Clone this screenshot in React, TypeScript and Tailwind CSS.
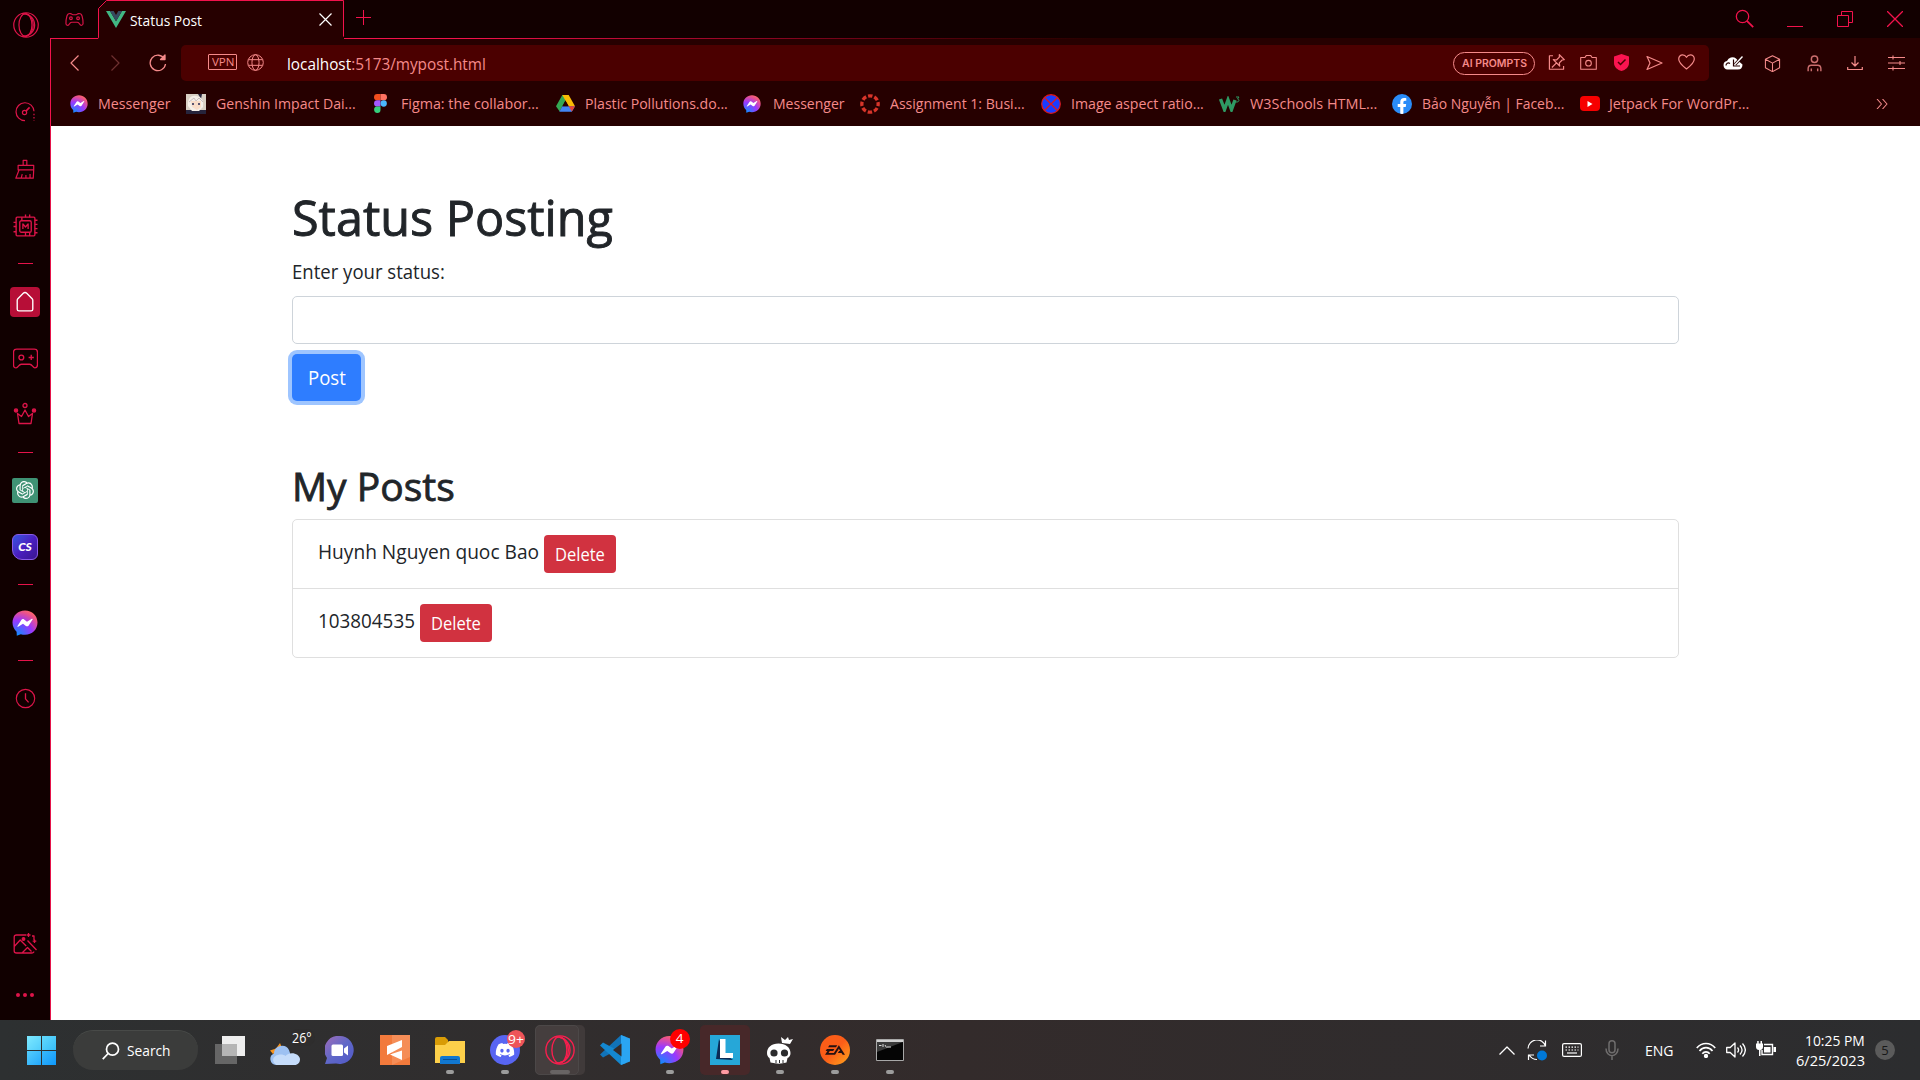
import React, { useLayoutEffect, useRef, useState } from "react";
import { FaDiscord, FaFacebookF } from "react-icons/fa";
import { SiOpenai, SiEa } from "react-icons/si";

/* Text condensed or widened to fill the width of its box. */
function T({ className = "", children }: { className?: string; children: React.ReactNode }) {
  const box = useRef<HTMLSpanElement>(null);
  const inner = useRef<HTMLSpanElement>(null);
  const [k, setK] = useState(1);
  useLayoutEffect(() => {
    if (box.current && inner.current) setK(box.current.clientWidth / inner.current.offsetWidth);
  }, []);
  return (
    <span ref={box} className={`block shrink-0 whitespace-nowrap ${className}`}>
      <span ref={inner} className="inline-block origin-left" style={{ transform: `scaleX(${k})` }}>
        {children}
      </span>
    </span>
  );
}

type IconProps = { className?: string; box?: string; sw?: number; children: React.ReactNode };
function I({ className = "", box = "0 0 24 24", sw = 1.3, children }: IconProps) {
  return (
    <svg viewBox={box} className={`block shrink-0 ${className}`} fill="none" stroke="currentColor" strokeWidth={sw} strokeLinejoin="round">
      {children}
    </svg>
  );
}

function Messenger({ className = "", id }: { className?: string; id: string }) {
  return (
    <svg viewBox="0 0 26 26" className={`block shrink-0 ${className}`}>
      <defs>
        <radialGradient id={id} cx="0.2" cy="1" r="1.1">
          <stop offset="0" stopColor="#0a8fff" />
          <stop offset="0.55" stopColor="#9a38ff" />
          <stop offset="0.85" stopColor="#e8508f" />
          <stop offset="1" stopColor="#ff6a68" />
        </radialGradient>
      </defs>
      <path d="M13 .4C5.800.4.5 5.700.5 12.600c0 3.700 1.500 6.800 4.100 9.100l.2 4 4-1.500c1.300.4 2.700.6 4.200.6 7.200 0 12.500-5.200 12.500-12.200S20.200.4 13 .4z" fill={`url(#${id})`} />
      <path d="M5.500 16l3.800-6c.6-1 1.900-1.200 2.800-.5l2.900 2.200 4.900-2.900c.6-.3 1 .1.700.6l-3.900 6c-.6 1-1.900 1.200-2.800.5l-2.900-2.100-4.900 2.900c-.5.3-1-.2-.6-.7z" fill="#fff" />
    </svg>
  );
}

function Opera({ className = "" }: { className?: string }) {
  return (
    <I className={className} sw={1.1}>
      <circle cx="12" cy="12" r="11.300" />
      <ellipse cx="11.500" cy="12" rx="6" ry="10.500" />
      <path d="M12 2c4 .5 6.700 4.500 6.700 10S16 21.500 12 22" />
      <path d="M8 1.500c7-.5 12 4.500 12 10.500s-5 11-12 10.500" />
    </I>
  );
}

const Sep = ({ className }: { className: string }) => <div className={`h-px w-[15px] shrink-0 bg-[#e5134a] ${className}`} />;
const Slot = ({ className, children }: { className: string; children: React.ReactNode }) => (
  <div className={`flex h-[30px] w-[30px] shrink-0 items-center justify-center ${className}`}>{children}</div>
);

function Sidebar() {
  return (
    <aside className="flex w-[50px] shrink-0 flex-col items-center bg-[#110000] text-[#dd1449]">
      <Slot className="mt-[10px] ml-px"><Opera className="h-[26px] w-[26px]" /></Slot>
      <Slot className="mt-[57px]">
        <I className="h-[22px] w-[22px]">
          <path d="M12 21.500a9.800 9.800 0 1 1 9.800-10.300" />
          <path d="M21.800 14v7.500" strokeDasharray="1.500 2" />
          <circle cx="11.500" cy="12.500" r="2.300" /><path d="M13 11l4-4" strokeWidth="1.800" />
        </I>
      </Slot>
      <Slot className="mt-[27px]">
        <I className="h-[22px] w-[22px]">
          <path d="M10 8V2.500h4V8M4.500 8h17v5h-17zM5.500 13L2 22h19l.5-9M8 21.500l1-4M13 21.500v-3M17.500 21.500v-4" />
        </I>
      </Slot>
      <Slot className="mt-[27px]">
        <I className="h-[25px] w-[25px]">
          <rect x="3" y="3" width="18" height="18" rx="1" /><rect x="6.500" y="6.500" width="11" height="11" rx="1.500" />
          <path d="M9.500 14.500v-5l2.500 3 2.500-3v5M8.500 3v3.500M12 .5V3M16 .5V3M12 17.500V21M16 17.500V21M.5 8H3M.5 12H3M.5 17H3M21 6h2.500M21 10h2.500M21 14h2.500M21 18h2.500" />
        </I>
      </Slot>
      <Sep className="mt-[22px]" />
      <Slot className="mt-[23px] rounded-[4px] bg-[#b70e37] text-white">
        <I className="h-[22px] w-[22px]" sw={1.5}>
          <path d="M3.500 10.200c0-.7.200-1.200.700-1.700l5.900-6c1.200-1.200 2.600-1.200 3.800 0l5.900 6c.5.5.700 1 .7 1.700v9.600c0 1.200-.7 1.900-1.900 1.900H5.400c-1.200 0-1.900-.7-1.900-1.900z" />
        </I>
      </Slot>
      <Slot className="mt-[26px]">
        <I className="h-[25px] w-[25px]" sw={1.3}>
          <path d="M3.500 3h17q3 0 3 3v12q0 3-2.500 3c-2 0-2.500-3.500-5-3.500H8c-2.500 0-3 3.500-5 3.500Q.5 21 .5 18V6q0-3 3-3z" /><circle cx="8" cy="11" r="2.300" /><path d="M17.500 8.500v5M15 11h5" />
        </I>
      </Slot>
      <Slot className="mt-[26px]">
        <I className="h-[24px] w-[24px]">
          <path d="M4.500 11.500L6 21.500h12l1.500-10-4 3L12 8l-3.500 6.500z" /><circle cx="12" cy="3.500" r="2" /><circle cx="3" cy="8.500" r="1.600" fill="currentColor" /><circle cx="21" cy="8.500" r="1.600" fill="currentColor" />
        </I>
      </Slot>
      <Sep className="mt-[23px]" />
      <Slot className="mt-[22px]">
        <div className="flex h-[25px] w-[26px] items-center justify-center rounded-[2px] bg-[#3f9274] text-[18px] text-white"><SiOpenai /></div>
      </Slot>
      <Slot className="mt-[27px]">
        <div className="flex h-[26px] w-[26px] items-center justify-center rounded-[6px] rounded-bl-[10px] border border-[#8b5be8] bg-linear-to-br from-[#2d55e0] via-[#4a1ec0] to-[#3a1690] font-['Lato'] text-[12px] font-black italic text-white">CS</div>
      </Slot>
      <Sep className="mt-[22px]" />
      <Slot className="mt-[23px]"><Messenger id="ms-side" className="h-[26px] w-[26px]" /></Slot>
      <Sep className="mt-[22px]" />
      <Slot className="mt-[22px]">
        <I className="h-[21px] w-[21px]"><circle cx="12" cy="12" r="10.500" /><path d="M12 6v6.500l3.500 4" strokeWidth="1.500" /></I>
      </Slot>
      <Slot className="mt-[216px]">
        <I className="h-[24px] w-[24px]">
          <path d="M13 3H3.500C2 3 1.200 3.800 1.200 5v14c0 1.200.8 2 2.300 2h15c1.500 0 2.300-.8 2.300-1.500M1.200 14.500l6-6.500 6 6M9 21l5.500-5.500 4 4M14.500 8.500L23.500 18M19 4h2v4M15.500 1v4M13.500 3h4M21.500 7.500v3.500M19.700 9.200h3.600" />
          <circle cx="10.500" cy="7" r="1.300" fill="currentColor" />
        </I>
      </Slot>
      <Slot className="mt-[21px] gap-[3px]">
        <i className="h-[4px] w-[4px] rounded-full bg-[#dd1449]" /><i className="h-[4px] w-[4px] rounded-full bg-[#dd1449]" /><i className="h-[4px] w-[4px] rounded-full bg-[#dd1449]" />
      </Slot>
    </aside>
  );
}

function TabStrip() {
  return (
    <div className="flex h-[39px] shrink-0 bg-[#120000] text-[#f2124c]">
      <div className="flex w-[48px] items-center justify-center border-b border-[#f2124c]">
        <I className="h-[19px] w-[19px] text-[#d91347]" sw={1.5}>
          <path d="M7 4.500c-2.500-.3-4 .8-4.600 3.200C1.600 10.700 1 14 1.200 17c.2 2.700 3 3.200 4.300.8.800-1.500 1.500-2.300 3-2.300h7c1.500 0 2.200.8 3 2.300 1.300 2.400 4.100 1.900 4.300-.8.2-3-.4-6.300-1.200-9.300C21 5.300 19.500 4.200 17 4.500c-1.500.2-1.500 1.500-3 1.500h-4C8.500 6 8.500 4.700 7 4.500z" />
          <circle cx="7.500" cy="10.500" r="1.700" /><circle cx="16.500" cy="10.500" r="1.700" />
        </I>
      </div>
      <div className="relative flex w-[246px] items-center bg-[#120000]">
        <svg className="absolute inset-0" width="246" height="39" viewBox="0 0 246 39">
          <path d="M0 39V8.500L8.500.5H245.500V39z" fill="#260000" />
          <path d="M0 38.500L.5 37V8.500L8.500.5H245.500V36l2 2.500" fill="none" stroke="#f2124c" />
        </svg>
        <svg className="relative ml-[8px] h-[17px] w-[20px]" viewBox="0 0 20 17">
          <path d="M0 0h4l6 10.300L16 0h4L10 17z" fill="#41b883" /><path d="M4 0h3.700L10 4l2.300-4H16l-6 10.300z" fill="#35495e" />
        </svg>
        <T className="relative ml-[4px] w-[72px] text-[15px] leading-[20px] text-white">Status Post</T>
        <I className="relative ml-[117px] h-[13px] w-[13px] text-white" box="0 0 13 13" sw={1.2}><path d="M.5.500l12 12M12.500.500l-12 12" /></I>
      </div>
      <div className="flex flex-1 flex-col">
        <div className="flex flex-1 items-center">
          <I className="mb-[3px] ml-[12px] h-[15px] w-[15px]" box="0 0 15 15" sw={1}><path d="M7.500 0v15M0 7.500h15" /></I>
          <I className="mb-[2px] ml-auto h-[19px] w-[19px]" sw={1.600}><circle cx="9.500" cy="9.500" r="7.800" /><path d="M15 15l8 8" strokeWidth="2.200" /></I>
          <div className="mt-[15px] ml-[33px] h-px w-[16px] bg-[#f2124c]" />
          <I className="ml-[34px] h-[16px] w-[16px]" box="0 0 16 16" sw={1}><path d="M.5 4.500h11v11H.5zM4.500 4.500V.5h11v11h-4" /></I>
          <I className="mr-[17px] ml-[34px] h-[16px] w-[16px]" box="0 0 16 16" sw={1.300}><path d="M0 0l16 16M16 0L0 16" /></I>
        </div>
        <div className="h-px bg-linear-to-r from-[#f2124c] from-8% to-[#260000] to-48%" />
      </div>
    </div>
  );
}

function AddressRow() {
  return (
    <div className="flex h-[42px] items-end text-[#f58a8a]">
      <div className="flex h-[36px] items-center">
        <I className="ml-[19px] h-[16px] w-[9px]" box="0 0 9 16" sw={1.200}><path d="M8.500.500L1 8l7.500 7.500" /></I>
        <I className="ml-[32px] h-[16px] w-[9px] opacity-35" box="0 0 9 16" sw={1.200}><path d="M.5.500L8 8 .5 15.500" /></I>
        <I className="ml-[29px] h-[18px] w-[18px]" box="0 0 18 18" sw={1.300}><path d="M15.500 5A7.700 7.700 0 1 0 16.500 10" /><path d="M16 1v4.500h-4.500z" fill="currentColor" /></I>
      </div>
      <div className="ml-[14px] flex h-[36px] w-[1528px] items-center rounded-[5px] bg-[#4b0000]">
        <div className="mb-[2px] ml-[27px] flex h-[16px] w-[29px] items-center justify-center rounded-[1px] border border-[#f58a8a]">
          <T className="w-[22px] text-[11px] leading-[14px]">VPN</T>
        </div>
        <I className="mb-[2px] ml-[10px] h-[17px] w-[17px]" sw={1.400}><circle cx="12" cy="12" r="11" /><ellipse cx="12" cy="12" rx="5" ry="11" /><path d="M2 8h20M2 16h20" /></I>
        <T className="mt-[2px] ml-[23px] w-[199px] text-[16px]"><span className="text-white">localhost</span>:5173/mypost.html</T>
        <div className="ml-auto flex h-[23px] w-[82px] items-center justify-center rounded-full border border-[#f58a8a]">
          <T className="w-[65px] font-['Inter'] text-[10px] leading-[20px] font-semibold">AI PROMPTS</T>
        </div>
        <I className="mb-[2px] ml-[13px] h-[17px] w-[17px]" sw={1.700}><path d="M7 2.500H2v19h20V17M16 1l7 7-3 .5-4 4 .5 4.500L7.500 8l4.500.500 4-4zM12 12.500L5.500 19" /></I>
        <I className="mb-[2px] ml-[15px] h-[17px] w-[17px]" sw={1.500}><path d="M1 5h6l2-3h6l2 3h6v16.500H1z" /><circle cx="12" cy="13" r="4" /></I>
        <svg viewBox="0 0 15 17" className="mb-[2px] ml-[17px] h-[17px] w-[15px]"><path d="M7.500 0L15 2.500V9c0 4-3.500 7-7.500 8C3.500 16 0 13 0 9V2.500z" fill="#fa1450" /><path d="M4 8l2.500 2.500 5-5" fill="none" stroke="#4b0000" strokeWidth="1.500" /></svg>
        <I className="ml-[17px] h-[16px] w-[17px]" box="0 0 17 16" sw={1.200}><path d="M1 1.500L16 8 1 14.500 4 8z" /></I>
        <I className="mr-[14px] mb-[3px] ml-[15px] h-[16px] w-[17px]" box="0 0 17 16" sw={1.200}><path d="M8.500 15C4 11.500.7 8.500.7 5 .7 2.500 2.500.8 4.600.8c1.700 0 3 .900 3.900 2.500C9.400 1.700 10.700.8 12.400.8c2.100 0 3.900 1.700 3.900 4.200 0 3.500-3.300 6.500-7.800 10z" /></I>
      </div>
      <div className="flex h-[36px] items-center">
        <svg viewBox="0 0 20 14" className="ml-[14px] h-[14px] w-[20px]"><path d="M4.500 13.500A4.300 4.300 0 0 1 4 5a6 6 0 0 1 9-2.500l3 3L19.500 8.500c0 3-1.500 5-4.500 5z" fill="#fff" /><path d="M19.500.5l-7.500 8" stroke="#260000" strokeWidth="3" /><path d="M19.500.5l-7.500 8" stroke="#fff" strokeWidth="1.300" /><path d="M10.500 3.500V10H17M3 9.500c0-2 2-3.500 4-2" stroke="#260000" strokeWidth="1.200" fill="none" /></svg>
        <I className="ml-[21px] h-[17px] w-[17px]" sw={1.500}><path d="M12 1l10 5v12l-10 5.500L2 18V6zM2 6l10 5.500L22 6M12 11.500v12" /></I>
        <I className="ml-[25px] h-[17px] w-[17px] opacity-80" sw={2}><circle cx="12" cy="6" r="4.500" /><path d="M3 23v-3.500c0-3 1.500-5 4.500-5h9c3 0 4.500 2 4.500 5V23M7.500 23v-4M16.500 23v-4" /></I>
        <I className="ml-[24px] h-[16px] w-[16px]" box="0 0 16 16" sw={1.200}><path d="M8 1v10M4.500 7.500L8 11l3.500-3.500M.7 12v2.500h14.600V12" /></I>
        <I className="ml-[25px] h-[16px] w-[17px]" box="0 0 17 16" sw={1.100}><path d="M0 2.500h17M0 8h17M0 13.500h17M5 .500v4M12 6v4M5 11.500v4" /></I>
      </div>
    </div>
  );
}

function Bookmarks() {
  const ic = "h-[20px] w-[20px] shrink-0";
  return (
    <div className="flex h-[45px] items-center text-[15px] text-[#f58a8a]">
      <Messenger id="ms-b1" className="ml-[19px] h-[18px] w-[18px]" />
      <T className="ml-[10px] w-[73px]">Messenger</T>
      <svg viewBox="0 0 20 20" className={`ml-[15px] ${ic}`}>
        <path d="M0 0h20v20H0z" fill="#d8cfc4" /><path d="M0 16h20v4H0zM12 0h4l-1 5z" fill="#26243c" /><path d="M2 12C1 4 6 1 10 2c5 0 8 4 7 11l-4 4H6z" fill="#f5efe8" /><path d="M5 7h10v6l-4 3-5-3z" fill="#f9dcc8" /><path d="M6 9h2v2H6zM12 9h2v2h-2z" fill="#5a5470" /><path d="M3 8l5-4 2 3 3-3 4 4" fill="none" stroke="#c9bdc0" />
      </svg>
      <T className="ml-[10px] w-[140px]">Genshin Impact Dai...</T>
      <svg viewBox="0 0 13 19" className="ml-[18px] h-[19px] w-[13px] shrink-0">
        <path d="M3.200 0h3.300v6.300H3.200a3.150 3.150 0 0 1 0-6.300z" fill="#f24e1e" /><path d="M6.500 0h3.300a3.150 3.150 0 0 1 0 6.300H6.500z" fill="#ff7262" /><path d="M3.200 6.300h3.300v6.300H3.200a3.150 3.150 0 0 1 0-6.300z" fill="#a259ff" /><circle cx="9.700" cy="9.500" r="3.150" fill="#4ab8fd" /><path d="M3.200 12.600h3.300v3.200a3.200 3.200 0 1 1-3.300-3.200z" fill="#35cf7c" />
      </svg>
      <T className="ml-[14px] w-[138px]">Figma: the collabor...</T>
      <svg viewBox="0 0 18 16" className="ml-[17px] h-[17px] w-[19px] shrink-0">
        <path d="M6 0h6l-3 5-5.500 10.500L0 10.500z" fill="#34a853" /><path d="M6 0h6l6 10.500h-6z" fill="#fbbc04" /><path d="M3.200 15.700L6 10.500h12l-3 5.200z" fill="#4285f4" /><path d="M12 10.500h6l-3 5z" fill="#ea4335" /><path d="M9 5.300l3 5.200H6z" fill="#260000" />
      </svg>
      <T className="ml-[10px] w-[143px]">Plastic Pollutions.do...</T>
      <Messenger id="ms-b2" className="ml-[15px] h-[18px] w-[18px]" />
      <T className="ml-[12px] w-[72px]">Messenger</T>
      <I className={`ml-[15px] ${ic}`} sw={4}><circle cx="12" cy="12" r="9.800" stroke="#d8352a" strokeDasharray="5.300 2.400" strokeDashoffset="2.650" /></I>
      <T className="ml-[10px] w-[135px]">Assignment 1: Busi...</T>
      <svg viewBox="0 0 20 20" className={`ml-[16px] ${ic}`}><circle cx="10" cy="10" r="9.300" fill="#1a3cff" stroke="#e01818" strokeWidth="1.200" /><path d="M3.500 3.500l13 13M16.500 3.500l-13 13" stroke="#e01818" strokeWidth="1.300" /></svg>
      <T className="ml-[10px] w-[133px]">Image aspect ratio...</T>
      <svg viewBox="0 0 21 16" className="ml-[15px] h-[16px] w-[21px] shrink-0">
        <path d="M1.500 3l4 10.500L9 4l3.500 9.500L16 4" fill="none" stroke="#2f9a63" strokeWidth="3.400" /><path d="M17 1h3l-1.500 2c2 0 2 3-.5 3h-1" fill="none" stroke="#2f9a63" />
      </svg>
      <T className="ml-[10px] w-[127px]">W3Schools HTML...</T>
      <div className="ml-[15px] flex h-[20px] w-[20px] shrink-0 items-end justify-center overflow-hidden rounded-full bg-[#2a8cf8] text-[16px] text-white"><FaFacebookF /></div>
      <T className="ml-[10px] w-[142px]">Bảo Nguyễn | Faceb...</T>
      <div className="ml-[16px] flex h-[15px] w-[20px] shrink-0 items-center justify-center rounded-[4px] bg-[#f60000]">
        <svg viewBox="0 0 6 6" className="h-[6px] w-[6px]"><path d="M.5 0l5 3-5 3z" fill="#fff" /></svg>
      </div>
      <T className="ml-[9px] w-[140px]">Jetpack For WordPr...</T>
      <I className="mr-[32px] ml-auto h-[10px] w-[12px]" box="0 0 12 10" sw={1.100}><path d="M1 0l4.500 5L1 10M6.500 0L11 5l-4.500 5" /></I>
    </div>
  );
}

function Post({ text, width }: { text: string; width: string }) {
  return (
    <li className="flex h-[69px] items-center border-b border-[#dfdfdf] pl-[25px] last:h-[68px] last:border-b-0">
      <T className={`mb-[4px] leading-[30px] ${width}`}>{text}</T>
      <button className="ml-[5px] flex h-[38px] w-[72px] items-center justify-center rounded-[4px] bg-[#d13240] text-[17.500px] text-white">
        <T className="w-[50px]">Delete</T>
      </button>
    </li>
  );
}

function Page() {
  return (
    <main className="flex-1 border-l border-[#e5134a] bg-white pl-[241px] text-[20px] text-[#212529]">
      <div className="w-[1387px] pt-[61px]">
        <h1 className="text-[49px] leading-[60px] [-webkit-text-stroke:0.9px_#212529]"><T className="w-[321px]">Status Posting</T></h1>
        <label className="mt-[10px] block leading-[30px]"><T className="w-[153px]">Enter your status:</T></label>
        <input className="mt-[9px] block h-[48px] w-full rounded-[5px] border border-[#ced4da] bg-white" />
        <button className="mt-[10px] flex h-[47px] w-[69px] items-center justify-center rounded-[5px] bg-[#2e7dff] text-white ring-4 ring-[#9ec5ff]"><T className="w-[38px]">Post</T></button>
        <h2 className="mt-[61px] text-[39px] leading-[48px] [-webkit-text-stroke:0.8px_#212529]"><T className="w-[163px]">My Posts</T></h2>
        <ul className="mt-[9px] rounded-[5px] border border-[#dfdfdf]">
          <Post text="Huynh Nguyen quoc Bao" width="w-[221px]" />
          <Post text="103804535" width="w-[97px]" />
        </ul>
      </div>
    </main>
  );
}

function TaskApp({ children, dot = "", className = "" }: { children: React.ReactNode; dot?: string; className?: string }) {
  return (
    <div className="relative flex w-[55px] shrink-0 items-center justify-center">
      <div className={`relative flex h-[50px] w-[50px] items-center justify-center rounded-[5px] ${className}`}>{children}</div>
      {dot && <i className={`absolute bottom-[6px] h-[4px] rounded-full ${dot}`} />}
    </div>
  );
}

function Taskbar() {
  const dot = "w-[8px] bg-[#9c9c9c]";
  return (
    <footer className="flex h-[60px] bg-linear-to-r from-[#2d3031] via-[#332b2b] to-[#2c2d2f] font-['Open_Sans'] text-[15px] text-white">
      <div className="flex h-[60px] w-[202px] shrink-0 items-center">
        <div className="ml-[27px] grid grid-cols-2 gap-px">
          <i className="h-[14px] w-[14px] bg-linear-to-br from-[#7de9ff] to-[#50cdfb]" /><i className="h-[14px] w-[14px] bg-linear-to-br from-[#62dafd] to-[#35bdf8]" />
          <i className="h-[14px] w-[14px] bg-linear-to-br from-[#53cdfc] to-[#22a8fb]" /><i className="h-[14px] w-[14px] bg-linear-to-br from-[#38b9fa] to-[#0b98fb]" />
        </div>
        <div className="ml-[17px] flex h-[40px] w-[125px] items-center rounded-full border-t border-[#484a48] bg-[#3b3c3b]">
          <I className="ml-[29px] h-[18px] w-[18px]" sw={2.300}><circle cx="14" cy="9.500" r="8" /><path d="M8.500 15L1 22.800" /></I>
          <T className="ml-[7px] w-[44px]">Search</T>
        </div>
      </div>
      <TaskApp>
        <svg viewBox="0 0 30 28" className="h-[28px] w-[30px]"><path d="M0 8h22v20H0z" fill="#666" /><path d="M7 0h23v20H7z" fill="#eee" /><path d="M7 8h15v12H7z" fill="#b5b5b5" /></svg>
      </TaskApp>
      <TaskApp>
        <svg viewBox="0 0 30 22" className="mt-[7px] h-[22px] w-[30px]">
          <path d="M10 0l2 5-9 6-3-3.500 6-2z" fill="#f7941e" /><path d="M6 22A6 6 0 0 1 4 10.500 8 8 0 0 1 19 7l5 15z" fill="#9dc1f2" /><path d="M6.500 22a5 5 0 0 1-1-9c3-2 8-2 10 0 4-5 14-3 14.500 3 0 3.500-2 6-5.500 6z" fill="#c5dcfa" />
        </svg>
        <span className="absolute top-[4px] right-[-5px] rounded-full bg-[#2e2d2d] pr-[3px] pl-[2px] leading-[17px]"><T className="w-[20px]">26°</T></span>
      </TaskApp>
      <TaskApp>
        <svg viewBox="0 0 29 29" className="h-[29px] w-[29px]">
          <defs><linearGradient id="chat" x1="0" y1="0" x2="1" y2="1"><stop offset="0" stopColor="#a06cb8" /><stop offset=".5" stopColor="#6068c8" /><stop offset="1" stopColor="#5058c8" /></linearGradient></defs>
          <path d="M15 0a14 14 0 1 1-4 27.500L0 28l2-6A14 14 0 0 1 15 0z" fill="url(#chat)" /><rect x="6.500" y="8.500" width="11.500" height="11.500" rx="1.500" fill="#fff" /><path d="M19 12.500l4-3v10l-4-3z" fill="#fff" />
        </svg>
      </TaskApp>
      <TaskApp>
        <svg viewBox="0 0 30 30" className="h-[30px] w-[30px]"><path d="M0 0h30v30H0z" fill="#f27a3c" /><path d="M12 0h18v22L12 30z" fill="#f58d57" /><path d="M22 5v7L7 20v-9zM10 19.500l12-4V25z" fill="#fff" /></svg>
      </TaskApp>
      <TaskApp dot={dot}>
        <svg viewBox="0 0 30 27" className="h-[27px] w-[30px]">
          <path d="M0 2q0-2 2-2h8l3 3v6H0z" fill="#d99c06" /><path d="M0 8h10l4-4h16v22H0z" fill="#fdd04a" /><path d="M5 27v-6q0-2 2-2h16q2 0 2 2v6z" fill="#1177d0" /><path d="M8 22.500h14" stroke="#0a4f94" />
        </svg>
      </TaskApp>
      <TaskApp dot={dot}>
        <div className="flex h-[30px] w-[30px] items-center justify-center rounded-full bg-[#5865f2] text-[20px]"><FaDiscord /></div>
        <div className="absolute top-[5px] right-[5px] flex h-[18px] w-[18px] items-center justify-center rounded-full bg-[#ee5459] leading-none"><T className="w-[16px] text-[13px] leading-[16px]">9+</T></div>
      </TaskApp>
      <TaskApp dot="w-[20px] bg-[#686464]" className="bg-[#403a3a]">
        <div className="absolute inset-y-0 left-0 w-[44px] rounded-[5px] border border-[#4c4848] bg-[#453e3e]" />
        <Opera className="relative h-[30px] w-[30px] text-[#fa1e4e]" />
      </TaskApp>
      <TaskApp>
        <svg viewBox="0 0 30 30" className="h-[30px] w-[30px]">
          <path d="M0 19.500L21 0l5 2v8L3 22.500z" fill="#1173b8" /><path d="M0 10.500L3 7.500 26 20v8l-5 2z" fill="#1488d0" /><path d="M21 0l9 3.500v23L21 30z" fill="#2aa5f3" /><path d="M21.500 8.500v13L13 15z" fill="#332c2c" />
        </svg>
      </TaskApp>
      <TaskApp dot={dot}>
        <Messenger id="ms-t" className="h-[30px] w-[29px]" />
        <div className="absolute top-[4px] right-[5px] flex h-[20px] w-[20px] items-center justify-center rounded-full bg-[#ff0000] text-[13.500px] leading-none">4</div>
      </TaskApp>
      <TaskApp dot="w-[8px] bg-[#ff9aa2]" className="bg-[#472829]">
        <svg viewBox="0 0 30 30" className="h-[30px] w-[30px]"><path d="M0 0h30v30H0z" fill="#26a7d8" /><path d="M9 4L6 24l17 1-8-6z" fill="#0b2a55" /><path d="M10 4h5.500v14H23v5H10z" fill="#fff" /></svg>
      </TaskApp>
      <TaskApp dot={dot}>
        <svg viewBox="0 0 26 27" className="h-[27px] w-[26px]">
          <path d="M14 0l4 3 3-3 1 3 4-1-3 5-8-1z" fill="#fff" /><path d="M11.500 6.500C4.500 6.500 0 10.500 0 16c0 2.500 1 4 2.500 5l1 4.500c6 1.500 11 1.500 16 0l1-4.500c2-1 3-2.500 3-5 0-5.500-5-9.500-12-9.500z" fill="#fff" /><circle cx="7" cy="16" r="3.600" fill="#2b2b2d" /><circle cx="17.500" cy="16" r="3.600" fill="#2b2b2d" /><path d="M9 26v-3M12.500 26v-3M16 26v-3" stroke="#2b2b2d" />
        </svg>
      </TaskApp>
      <TaskApp dot={dot}>
        <div className="flex h-[30px] w-[30px] items-center justify-center rounded-full bg-linear-to-br from-[#fb5d18] from-50% to-[#fda51d] text-[20px] text-[#241212]"><SiEa /></div>
      </TaskApp>
      <TaskApp dot={dot}>
        <svg viewBox="0 0 28 22" className="h-[22px] w-[28px]"><path d="M.5.500h27v21H.5z" fill="#050505" stroke="#a8a8a8" /><path d="M1 1h26v2H1z" fill="#d0d0d0" /><path d="M1 3h26L1 13z" fill="#3a3a3a" /><path d="M3 6.500h2.500M7 5v3M9 6l1.500 2.500M11 8h4" stroke="#ddd" /></svg>
      </TaskApp>
      <div className="ml-auto flex items-center">
        <I className="h-[9px] w-[16px]" box="0 0 16 9" sw={1.300}><path d="M.5 8.500L8 1l7.500 7.500" /></I>
        <svg viewBox="0 0 20 21" className="ml-[12px] h-[21px] w-[20px]"><path d="M1 8.500A9 9 0 0 1 18.500 6M18.500.500V6H13M10 19.500c-3 0-6-1.500-8-4.500M1.500 20v-5H7" fill="none" stroke="#fff" strokeWidth="1.200" /><circle cx="15" cy="15.500" r="5" fill="#0078d7" /></svg>
        <I className="ml-[15px] h-[14px] w-[20px]" box="0 0 20 14" sw={1.200}><rect x=".6" y=".6" width="18.800" height="12.800" rx="1.500" /><path d="M3.500 4.200h13M3.500 7h13" strokeDasharray="1.500 1.500" /><path d="M5 10h10" /></I>
        <I className="ml-[23px] h-[20px] w-[14px] text-[#6f6d6d]" box="0 0 14 20" sw={1.500}><rect x="4" y=".8" width="6" height="12" rx="3" /><path d="M1 8.500c0 9.500 12 9.500 12 0M7 16v4" /></I>
        <T className="ml-[26px] w-[29px]">ENG</T>
        <I className="ml-[22px] h-[16px] w-[20px]" box="0 0 20 16" sw={1.700}><path d="M.8 6c5-6 13.400-6 18.400 0M3.500 9c3.500-4.500 9.500-4.500 13 0M6.300 11.700c2-2.500 5.400-2.500 7.400 0" /><circle cx="10" cy="14" r="1.300" fill="currentColor" /></I>
        <I className="ml-[10px] h-[16px] w-[20px]" box="0 0 20 16" sw={1.300}><path d="M.7 5.500h3.500L9 1v14l-4.800-4.500H.7zM11.500 5.500c1.300 1.500 1.300 3.500 0 5M14 3.500c2.500 2.700 2.500 6.300 0 9M16.500 1.500c3.500 4 3.500 9 0 13" /></I>
        <svg viewBox="0 0 20 16" className="mb-[2px] ml-[10px] h-[16px] w-[20px]"><path d="M8 3.500h8.500v10H6V9" fill="none" stroke="#fff" strokeWidth="1.400" /><path d="M8 6h6.500v5.500H8zM17.500 6H20v5h-2.500zM0 2.500h7V6c0 2-1.500 3-2.500 3v6H3V9C1.500 9 0 8 0 6zM1.200 0h1.500v3H1.200zM4.500 0H6v3H4.500z" fill="#fff" /></svg>
        <div className="ml-[20px] flex flex-col items-end leading-[20px]"><T className="w-[60px]">10:25 PM</T><T className="w-[69px]">6/25/2023</T></div>
        <div className="mr-[25px] ml-[10px] flex h-[20px] w-[20px] items-center justify-center rounded-full bg-[#5b5b5b] text-[13px] leading-none text-[#181818]">5</div>
      </div>
    </footer>
  );
}

export default function App() {
  return (
    <div className="flex h-[1080px] w-[1920px] flex-col overflow-hidden bg-[#110000] font-['Open_Sans','Noto_Sans',sans-serif]">
      <div className="flex h-[1020px]">
        <Sidebar />
        <div className="flex w-[1870px] flex-col">
          <TabStrip />
          <header className="h-[87px] shrink-0 border-l border-[#f2124c] bg-[#260000]">
            <AddressRow />
            <Bookmarks />
          </header>
          <Page />
        </div>
      </div>
      <Taskbar />
    </div>
  );
}
